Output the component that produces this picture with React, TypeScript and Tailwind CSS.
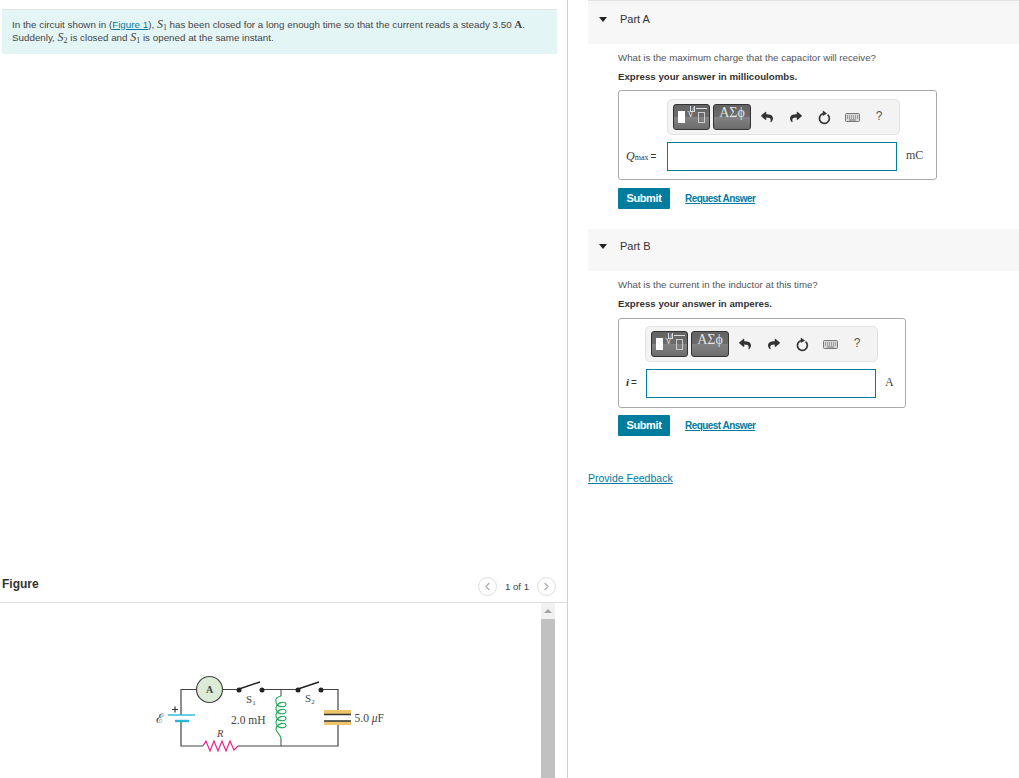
import { FaReply, FaShare } from "react-icons/fa";
import { ChevronLeft, ChevronRight } from "lucide-react";

const serif = "font-['Liberation_Serif',serif]";

function Keyboard() {
  return (
    <svg width="15" height="9" viewBox="0 0 15 9">
      <rect x="0.5" y="0.5" width="14" height="8" rx="1" fill="#d8d8d8" stroke="#777" />
      <path d="M2 3h11M2 5h11" stroke="#666" strokeWidth="1" strokeDasharray="1 1" />
      <path d="M4 7h7" stroke="#777" strokeWidth="1" />
    </svg>
  );
}

function ResetIcon() {
  return (
    <svg width="14" height="15" viewBox="0 0 14 15">
      <path d="M10.6 4.6A5 5 0 1 1 6.5 3.5" fill="none" stroke="#333" strokeWidth="1.7" />
      <path d="M5.8 0.6L10 3.4L5.8 6Z" fill="#333" />
    </svg>
  );
}

function Toolbar({ className }: { className: string }) {
  const btn =
    "h-[26px] rounded-[3px] border border-[#333] bg-[linear-gradient(#636363,#6b6b6b_48%,#828282_52%,#6c6c6c)] text-[#e4e4e4]";
  return (
    <div className={`flex h-[36px] items-center rounded-[5px] border border-[#e2e2e2] bg-[#f3f3f3] pl-[5px] ${className}`}>
      <div className={`${btn} relative w-[37px]`}>
        <span className="absolute left-[4px] top-[6px] h-[12px] w-[7px] bg-white" />
        <span className={`${serif} absolute left-[13px] top-[-2px] text-[13px] leading-[20px]`}>√</span>
        <span className="absolute left-[16px] top-[1px] h-[6px] w-[5px] border-x border-b border-[#ddd]" />
        <span className="absolute left-[24px] top-[7px] h-[11px] w-[7px] border border-[#ccc]" />
        <span className="absolute left-[22px] top-[3px] h-px w-[11px] bg-[#ddd]" />
      </div>
      <div className={`${btn} ${serif} ml-[3px] w-[38px] pb-[7px] text-center text-[14px] leading-[16px]`}>ΑΣϕ</div>
      <div className="ml-[3px] flex w-[26px] justify-center text-[#333]">
        <FaReply size={12} />
      </div>
      <div className="ml-[3px] flex w-[26px] justify-center text-[#333]">
        <FaShare size={12} />
      </div>
      <div className="ml-px flex w-[28px] justify-center">
        <ResetIcon />
      </div>
      <div className="flex w-[28px] justify-center">
        <Keyboard />
      </div>
      <div className="w-[26px] pb-[2px] text-center text-[12px] text-[#555]">?</div>
    </div>
  );
}

function PartHeader({ label, pad }: { label: string; pad: string }) {
  return (
    <div className={`flex h-full items-center bg-[#f7f7f7] pl-[11px] text-[11px] text-[#333] ${pad}`}>
      <span className="h-0 w-0 border-x-[4px] border-t-[5px] border-x-transparent border-t-[#222]" />
      <span className="ml-[13px]">{label}</span>
    </div>
  );
}

function AnswerBox({
  width,
  padTop,
  toolbarMargin,
  labelWidth,
  label,
  unit,
}: {
  width: string;
  padTop: string;
  toolbarMargin: string;
  labelWidth: string;
  label: React.ReactNode;
  unit: string;
}) {
  return (
    <div className={`ml-[30px] h-[90px] rounded-[3px] border border-[#aaa] bg-white ${padTop} ${width}`}>
      <Toolbar className={`w-[233px] ${toolbarMargin}`} />
      <div className="mt-[7px] flex items-center">
        <div className={`${serif} pb-[2px] pl-[7px] text-[#333] ${labelWidth}`}>{label}</div>
        <div className="h-[29px] w-[230px] border border-[#007c9e] bg-white" />
        <span className={`${serif} ml-[9px] pb-[3px] text-[12px] text-[#444]`}>{unit}</span>
      </div>
    </div>
  );
}

function Actions({ margin }: { margin: string }) {
  return (
    <div className={`ml-[30px] flex h-[21px] items-center ${margin}`}>
      <button className="h-[21px] w-[52px] rounded-[1px] bg-[#007c9e] text-[11px] font-bold tracking-[-0.4px] text-white">
        Submit
      </button>
      <a href="#" className="ml-[15px] text-[10px] font-bold tracking-[-0.55px] text-[#007c9e] underline">
        Request Answer
      </a>
    </div>
  );
}

function Circuit() {
  const wire = "#444";
  return (
    <svg width="260" height="108" viewBox="0 0 260 108">
      <path d="M41 45V19.5H56M82 19.5H99M122 19.5H158M181 19.5H198V43M198 51V76H98M63 76H41V51" fill="none" stroke={wire} strokeWidth="1.2" />
      <path d="M141 19.5V26M141 69V76" fill="none" stroke={wire} strokeWidth="1" />
      <circle cx="69.5" cy="19.5" r="13" fill="#dcebd6" stroke={wire} strokeWidth="1.2" />
      <text x="69.5" y="23" textAnchor="middle" fontFamily="Liberation Serif" fontSize="10" fontWeight="bold" fill="#444">A</text>
      <circle cx="99" cy="20" r="2.5" fill="#222" />
      <circle cx="122" cy="20" r="2.5" fill="#222" />
      <path d="M99 19L120 12" stroke="#222" strokeWidth="1.4" />
      <circle cx="158" cy="20" r="2.5" fill="#222" />
      <circle cx="181" cy="20" r="2.5" fill="#222" />
      <path d="M158 19L179 12" stroke="#222" strokeWidth="1.4" />
      <text x="106" y="33" fontFamily="Liberation Serif" fontSize="11" fill="#444">S<tspan fontSize="7" dy="2">1</tspan></text>
      <text x="165" y="32" fontFamily="Liberation Serif" fontSize="11" fill="#444">S<tspan fontSize="7" dy="2">2</tspan></text>
      <path d="M28 45H55" stroke="#29b6d8" strokeWidth="1.4" />
      <path d="M35 51H49" stroke="#29b6d8" strokeWidth="2.4" />
      <path d="M32 39.5H38M35 36.5V42.5" stroke="#333" strokeWidth="1.2" />
      <text x="16" y="53" fontFamily="DejaVu Serif" fontSize="13" fill="#444">ℰ</text>
      <text x="91" y="54" fontFamily="Liberation Serif" fontSize="11.5" fill="#444">2.0 mH</text>
      <text x="214.5" y="52" fontFamily="Liberation Serif" fontSize="11.5" fill="#444">5.0 <tspan fontStyle="italic">μ</tspan>F</text>
      <text x="77" y="67" fontFamily="Liberation Serif" fontSize="10.5" fontStyle="italic" fill="#444">R</text>
      <path
        d="M141 26C137 27 135 29 136 31C135 38 147 38 146 34C145 31 137 32 136 38C135 45 147 45 146 41C145 38 137 39 136 45C135 52 147 52 146 48C145 45 137 46 136 52C135 59 147 59 146 55C145 52 137 53 136 59C136 63 141 64 141 69"
        fill="none"
        stroke="#1fa65a"
        strokeWidth="1.1"
      />
      <rect x="184" y="40" width="27" height="4" fill="#f0c56a" />
      <rect x="184" y="51" width="27" height="4" fill="#f0c56a" />
      <path d="M184 44.5H211M184 51H211" stroke="#333" strokeWidth="1.6" />
      <path d="M63 76L66 71L70 81L74 71L78 81L82 71L86 81L90 71L94 80L98 76" fill="none" stroke="#e8238c" strokeWidth="1.2" />
    </svg>
  );
}

export default function App() {
  return (
    <div className="flex h-[778px] w-[1019px] overflow-hidden bg-white font-['Liberation_Sans',sans-serif]">
      <div className="flex w-[568px] shrink-0 flex-col border-r border-[#c5d3df]">
        <div className="ml-[2px] mt-[9px] h-[45px] w-[555px] border-t border-[#e3e3e3] bg-[#e4f5f6] pl-[10px] pt-[8px] text-[9.8px] leading-[13px] text-[#444]">
          <p className="h-[13px]">
            In the circuit shown in (
            <a href="#" className="text-[#007c9e] underline">Figure 1</a>
            ), <span className={`${serif} text-[12px] italic`}>S<span className="relative top-[2px] text-[8px] not-italic">1</span></span> has been closed for a long enough time so that the current reads a steady 3.50{" "}
            <span className={`${serif} text-[11px] font-bold`}>A</span>.
          </p>
          <p className="h-[13px]">
            Suddenly, <span className={`${serif} text-[12px] italic`}>S<span className="relative top-[2px] text-[8px] not-italic">2</span></span> is closed and{" "}
            <span className={`${serif} text-[12px] italic`}>S<span className="relative top-[2px] text-[8px] not-italic">1</span></span> is opened at the same instant.
          </p>
        </div>

        <div className="mt-[516px] flex h-[33px] items-center justify-between border-b border-[#ddd] pb-[5px] pl-[2px] pr-[11px]">
          <span className="text-[12px] font-bold text-[#333]">Figure</span>
          <div className="flex items-center pt-[5px] text-[9.6px] text-[#444]">
            <span className="flex h-[19px] w-[19px] items-center justify-center rounded-full border border-[#ddd] text-[#aaa]">
              <ChevronLeft size={13} />
            </span>
            <span className="mx-[8px] pt-[2px]">1 of 1</span>
            <span className="flex h-[19px] w-[19px] items-center justify-center rounded-full border border-[#ddd] text-[#aaa]">
              <ChevronRight size={13} />
            </span>
          </div>
        </div>

        <div className="flex min-h-0 flex-1">
          <div className="w-[541px] pl-[140px] pt-[67px]">
            <Circuit />
          </div>
          <div className="flex w-[14px] flex-col items-center bg-[#f1f1f1]">
            <span className="mt-[6px] h-0 w-0 border-x-[4px] border-b-[4px] border-x-transparent border-b-[#a3a3a3]" />
            <div className="mt-[6px] w-full flex-1 bg-[#c1c1c1]" />
          </div>
        </div>
      </div>

      <div className="ml-[20px] w-[431px] border-t border-[#e3e3e3]">
        <div className="h-[43px]">
          <PartHeader label="Part A" pad="pb-[6px]" />
        </div>
        <p className="ml-[30px] mt-[7px] text-[9.7px] leading-[13px] text-[#555]">
          What is the maximum charge that the capacitor will receive?
        </p>
        <p className="ml-[30px] mt-[6px] text-[9.7px] font-bold leading-[13px] text-[#333]">
          Express your answer in millicoulombs.
        </p>
        <div className="mt-[7px]">
          <AnswerBox
            width="w-[319px]"
            padTop="pt-[8px]"
            toolbarMargin="ml-[48px]"
            labelWidth="w-[48px]"
            label={
              <span className="flex items-baseline">
                <i className="text-[12px]">Q</i>
                <span className="text-[8px]">max</span>
                <span className="ml-[2px] font-['Liberation_Sans',sans-serif] text-[10px]">=</span>
              </span>
            }
            unit="mC"
          />
        </div>
        <Actions margin="mt-[8px]" />

        <div className="mt-[20px] h-[42px]">
          <PartHeader label="Part B" pad="pb-[8px]" />
        </div>
        <p className="ml-[30px] mt-[7px] text-[9.7px] leading-[13px] text-[#555]">
          What is the current in the inductor at this time?
        </p>
        <p className="ml-[30px] mt-[6px] text-[9.7px] font-bold leading-[13px] text-[#333]">
          Express your answer in amperes.
        </p>
        <div className="mt-[8px]">
          <AnswerBox
            width="w-[288px]"
            padTop="pt-[7px]"
            toolbarMargin="ml-[26px]"
            labelWidth="w-[27px]"
            label={
              <span className="flex items-baseline">
                <i className="text-[11px] font-bold">i</i>
                <span className="ml-[2px] font-['Liberation_Sans',sans-serif] text-[10px]">=</span>
              </span>
            }
            unit="A"
          />
        </div>
        <Actions margin="mt-[7px]" />

        <a href="#" className="mt-[35px] block text-[10.5px] text-[#007c9e] underline">
          Provide Feedback
        </a>
      </div>
    </div>
  );
}
